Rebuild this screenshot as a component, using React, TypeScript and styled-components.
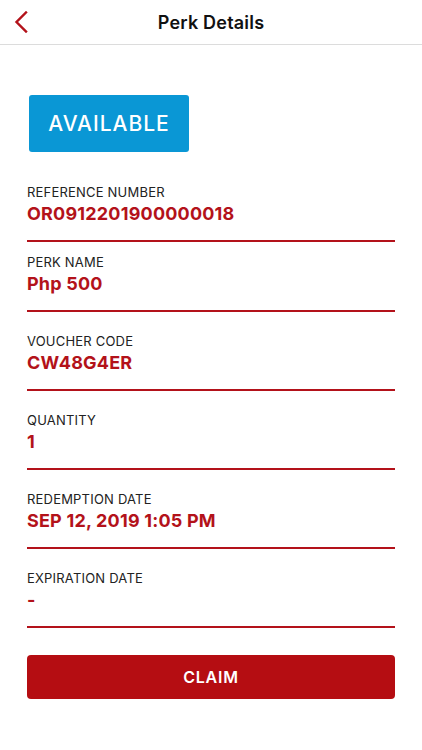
import React from "react";
import styled, { createGlobalStyle } from "styled-components";

const GlobalStyle = createGlobalStyle`
  body {
    margin: 0;
    background: #ffffff;
    font-family: Inter, "Noto Sans", sans-serif;
  }
`;

const fields = [
  { label: "REFERENCE NUMBER", value: "OR0912201900000018" },
  { label: "PERK NAME", value: "Php 500" },
  { label: "VOUCHER CODE", value: "CW48G4ER" },
  { label: "QUANTITY", value: "1" },
  { label: "REDEMPTION DATE", value: "SEP 12, 2019 1:05 PM" },
  { label: "EXPIRATION DATE", value: "-" },
];

function App() {
  return (
    <Page>
      <GlobalStyle />
      <Header>
        <BackButton aria-label="Back">
          <svg width="14" height="22" viewBox="0 0 14 22" fill="none">
            <path
              d="M12 1.5L2.5 11L12 20.5"
              stroke="#b3121a"
              strokeWidth="2.4"
              strokeLinecap="square"
            />
          </svg>
        </BackButton>
        <Title>Perk Details</Title>
      </Header>

      <Content>
        <StatusBadge>AVAILABLE</StatusBadge>

        {fields.map((f, i) => (
          <Field key={f.label} $first={i === 0} $compact={i === 1}>
            <Label>{f.label}</Label>
            <Value>{f.value}</Value>
          </Field>
        ))}

        <ClaimButton>CLAIM</ClaimButton>
      </Content>
    </Page>
  );
}

export default App;

const Page = styled.div`
  width: 422px;
  min-height: 750px;
  background: #ffffff;
`;

const Header = styled.div`
  position: relative;
  height: 44px;
  display: flex;
  align-items: center;
  justify-content: center;
  border-bottom: 1px solid #dcdcdc;
`;

const BackButton = styled.button`
  position: absolute;
  left: 14px;
  top: 11px;
  padding: 0;
  border: none;
  background: none;
  display: flex;
`;

const Title = styled.h1`
  margin: 0;
  font-size: 18px;
  font-weight: 600;
  color: #111111;
  letter-spacing: 0.2px;
`;

const Content = styled.div`
  padding: 0 27px;
  display: flex;
  flex-direction: column;
`;

const StatusBadge = styled.div`
  margin: 50px 0 0 2px;
  width: 160px;
  height: 57px;
  border-radius: 3px;
  background: #0a97d5;
  color: #ffffff;
  font-size: 21px;
  font-weight: 500;
  letter-spacing: 1px;
  display: flex;
  align-items: center;
  justify-content: center;
`;

const Field = styled.div<{ $first?: boolean; $compact?: boolean }>`
  padding-top: ${(p) => (p.$first ? "32px" : p.$compact ? "12px" : "21px")};
  padding-bottom: 15px;
  border-bottom: 2px solid #b3121a;
`;

const Label = styled.div`
  font-size: 13px;
  line-height: 16px;
  color: #222222;
  letter-spacing: 0.2px;
`;

const Value = styled.div`
  margin-top: 3px;
  font-size: 18px;
  line-height: 22px;
  font-weight: 700;
  color: #b3121a;
  letter-spacing: 0.2px;
`;

const ClaimButton = styled.button`
  margin-top: 27px;
  height: 44px;
  border: none;
  border-radius: 4px;
  background: #b50d12;
  color: #ffffff;
  font-family: Inter, "Noto Sans", sans-serif;
  font-size: 16px;
  font-weight: 600;
  letter-spacing: 0.8px;
`;
